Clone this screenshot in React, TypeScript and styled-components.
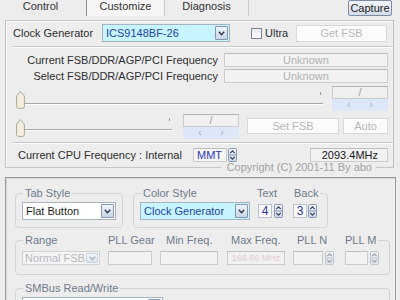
import React from "react";
import styled, { createGlobalStyle } from "styled-components";

const Global = createGlobalStyle`
  html, body { margin: 0; padding: 0; background: #ededed; }
  body { font-family: "Liberation Sans", Arial, sans-serif; font-size: 11px; color: #2a2a2a; }
  * { box-sizing: border-box; }
`;

const Root = styled.div`
  width: 400px;
  height: 300px;
  overflow: hidden;
  background: #ededed;
  display: flex;
  flex-direction: column;
  & > * {
    flex-shrink: 0;
  }
`;

/* ---------- tab bar ---------- */
const TabBar = styled.div`
  display: flex;
  height: 20px;
  align-items: flex-start;
`;

const Tab = styled.div<{ $w: number; $active?: boolean; $dark?: boolean; $pr?: number }>`
  width: ${(p) => p.$w}px;
  height: 16px;
  line-height: 13px;
  text-align: center;
  padding-right: ${(p) => p.$pr ?? 0}px;
  color: #333;
  background: ${(p) => (p.$active ? "#f6f6f6" : "transparent")};
  border-right: 1px solid ${(p) => (p.$dark ? "#8e8e8e" : "#cacaca")};
  box-shadow: ${(p) => (p.$dark ? "1px 0 0 #ffffff" : "none")};
`;

const CaptureBtn = styled.div`
  margin-left: auto;
  margin-right: 8px;
  width: 44px;
  height: 16px;
  line-height: 14px;
  text-align: center;
  color: #222;
  border: 1px solid #7c8ca6;
  border-radius: 2px;
  background: linear-gradient(#f2f5fa, #d2dbe8);
`;

/* ---------- top panel ---------- */
const Panel = styled.div`
  margin: 0 6px 0 5px;
  height: 147px;
  border: 1px solid #c2c2c2;
  border-bottom: none;
  box-shadow: inset 1px 1px 0 #fafafa;
  display: flex;
  flex-direction: column;
  & > * {
    flex-shrink: 0;
  }
`;

const Row = styled.div<{ $mt: number; $h: number; $pl?: number; $pr?: number; $align?: string }>`
  display: flex;
  align-items: ${(p) => p.$align ?? "center"};
  margin-top: ${(p) => p.$mt}px;
  height: ${(p) => p.$h}px;
  padding-left: ${(p) => p.$pl ?? 0}px;
  padding-right: ${(p) => p.$pr ?? 0}px;
  & > * {
    flex-shrink: 0;
  }
`;

const Label = styled.div<{ $w?: number; $right?: boolean; $ml?: number }>`
  width: ${(p) => (p.$w ? `${p.$w}px` : "auto")};
  flex: ${(p) => (p.$w ? "none" : "1")} !important;
  margin-left: ${(p) => p.$ml ?? 0}px;
  text-align: ${(p) => (p.$right ? "right" : "left")};
  white-space: nowrap;
  color: #2e2e2e;
`;

const Separator = styled.div<{ $mt: number }>`
  margin: ${(p) => p.$mt}px 0 0 7px;
  height: 2px;
  border-top: 1px solid #c6c6c6;
  border-bottom: 1px solid #ffffff;
`;

const Combo = styled.div<{ $w: number; $h: number; $bg: string; $ml?: number; $border?: string }>`
  width: ${(p) => p.$w}px;
  height: ${(p) => p.$h}px;
  margin-left: ${(p) => p.$ml ?? 0}px;
  display: flex;
  flex: none;
  border: 1px solid ${(p) => p.$border ?? "#a8b3c2"};
  background: ${(p) => p.$bg};
  padding: 1px;
`;

const ComboText = styled.div<{ $color: string; $pl?: number }>`
  flex: 1;
  min-width: 0;
  display: flex;
  align-items: center;
  padding-left: ${(p) => p.$pl ?? 2}px;
  color: ${(p) => p.$color};
  white-space: nowrap;
  overflow: hidden;
`;

const DropBtn = styled.div<{ $faded?: boolean }>`
  width: ${(p) => (p.$faded ? 12 : 13)}px;
  flex: none;
  display: flex;
  align-items: center;
  justify-content: center;
  border: 1px solid ${(p) => (p.$faded ? "#c7d3e3" : "#8596b0")};
  border-radius: 1px;
  background: ${(p) => (p.$faded ? "linear-gradient(#f2f6fb, #dde6f1)" : "linear-gradient(#f1f5fb, #c8d4e5)")};
`;

const Check = styled.div`
  margin-left: 21px;
  width: 11px;
  height: 11px;
  border: 1px solid #7c8696;
  background: linear-gradient(#e9ecf0, #ffffff);
`;

const FlatBtn = styled.div<{ $w: number; $h: number; $ml?: number; $mt?: number; $auto?: boolean }>`
  width: ${(p) => p.$w}px;
  height: ${(p) => p.$h}px;
  margin-left: ${(p) => (p.$auto ? "auto" : `${p.$ml ?? 0}px`)};
  margin-top: ${(p) => p.$mt ?? 0}px;
  display: flex;
  align-items: center;
  justify-content: center;
  color: #b8b8b8;
  background: #fbfbfb;
  border: 1px solid #dadada;
`;

const Field = styled.div<{ $w: number; $h: number; $ml?: number; $color?: string; $align?: string; $bg?: string }>`
  width: ${(p) => p.$w}px;
  height: ${(p) => p.$h}px;
  margin-left: ${(p) => p.$ml ?? 0}px;
  flex: none;
  display: flex;
  align-items: center;
  justify-content: ${(p) => p.$align ?? "center"};
  padding: 0 3px;
  white-space: nowrap;
  overflow: hidden;
  color: ${(p) => p.$color ?? "#b3b3b3"};
  background: ${(p) => p.$bg ?? "#f2f2f2"};
  border: 1px solid #cbcbcb;
  border-top-color: #bdbdbd;
`;

const Slider = styled.div<{ $w: number }>`
  width: ${(p) => p.$w}px;
  display: flex;
  align-items: flex-start;
  flex: none;
`;

const Thumb = styled.svg<{ $mt: number }>`
  margin-top: ${(p) => p.$mt}px;
  flex: none;
`;

const Track = styled.div<{ $mt: number }>`
  position: relative;
  flex: 1;
  height: 2px;
  margin-top: ${(p) => p.$mt}px;
  border-top: 1px solid #a6a6a6;
  border-bottom: 1px solid #ffffff;
  &::after {
    content: "";
    position: absolute;
    right: 2px;
    top: -12px;
    width: 1px;
    height: 3px;
    background: #9a9a9a;
  }
`;

const SpinPair = styled.div<{ $ml: number; $mt: number }>`
  width: 56px;
  margin-left: ${(p) => p.$ml}px;
  margin-top: ${(p) => p.$mt}px;
  display: flex;
  flex-direction: column;
`;

const PairValue = styled.div`
  height: 13px;
  line-height: 11px;
  text-align: center;
  color: #9c9c9c;
  background: #f0f0f0;
  border: 1px solid #cacaca;
  border-top-color: #b4b4b4;
`;

const PairStrip = styled.div`
  height: 12px;
  display: flex;
  align-items: center;
  justify-content: space-around;
  padding: 0 6px;
  background: #dce8f7;
  color: #9aaac0;
  font-size: 10px;
  line-height: 10px;
`;

const Footer = styled.div`
  margin: -6px 6px 0 5px;
  height: 13px;
  display: flex;
  align-items: center;
`;

const FooterLine = styled.div<{ $w?: number }>`
  height: 1px;
  background: #c6c6c6;
  flex: ${(p) => (p.$w ? "none" : "1")};
  width: ${(p) => (p.$w ? `${p.$w}px` : "auto")};
`;

const FooterText = styled.div`
  padding: 0 4px 0 6px;
  line-height: 13px;
  color: #a2a2a2;
  white-space: nowrap;
`;

/* ---------- lower panel ---------- */
const LowerPanel = styled.div`
  margin: 3px 4px 0 5px;
  height: 140px;
  border: 1px solid #9c9c9c;
  box-shadow: inset 1px 1px 0 #d6d6d6;
  padding: 9px 5px 0 9px;
  display: flex;
  flex-direction: column;
  & > * {
    flex-shrink: 0;
  }
`;

const GroupRow = styled.div`
  display: flex;
  align-items: flex-start;
  gap: 10px;
`;

const Group = styled.fieldset<{ $w?: number; $mt?: number; $pb?: number }>`
  width: ${(p) => (p.$w ? `${p.$w}px` : "auto")};
  flex: none;
  margin: ${(p) => p.$mt ?? 0}px 0 0 0;
  padding: 2px 6px ${(p) => p.$pb ?? 7}px 6px;
  border: 1px solid #d3d3d3;
  border-radius: 4px;
  min-inline-size: 0;
`;

const Legend = styled.legend`
  display: flex;
  margin-left: 1px;
  padding: 0 2px;
  line-height: 13px;
  color: #6e7b8c;
`;

const LegendItem = styled.span<{ $w?: number }>`
  width: ${(p) => (p.$w ? `${p.$w}px` : "auto")};
  flex: none;
  white-space: nowrap;
`;

const FieldRow = styled.div<{ $h: number; $mt?: number }>`
  display: flex;
  align-items: center;
  height: ${(p) => p.$h}px;
  margin-top: ${(p) => p.$mt ?? 0}px;
`;

const NumBox = styled.div<{ $ml: number }>`
  width: 14px;
  height: 14px;
  flex: none;
  margin-left: ${(p) => p.$ml}px;
  display: flex;
  align-items: center;
  justify-content: center;
  color: #2c34a8;
  font-size: 12px;
  background: #f9f9f9;
  border: 1px solid #b9c2ce;
`;

const SpinWrap = styled.div<{ $ml: number; $faded?: boolean }>`
  margin-left: ${(p) => p.$ml}px;
  display: flex;
  flex: none;
  opacity: ${(p) => (p.$faded ? 0.45 : 1)};
`;

const FaintText = styled.span`
  font-size: 9px;
`;

const ValueText = styled.span`
  padding-right: 6px;
`;

/* ---------- small drawings ---------- */
const Chevron = ({ faded }: { faded?: boolean }) => (
  <svg width="7" height="5" viewBox="0 0 7 5">
    <path d="M0.8 0.8 L3.5 3.8 L6.2 0.8" fill="none" stroke={faded ? "#a9b6c8" : "#2e3850"} strokeWidth="1.4" />
  </svg>
);

const Spinner = ({ ml, faded, h = 14 }: { ml: number; faded?: boolean; h?: number }) => (
  <SpinWrap $ml={ml} $faded={faded}>
    <svg width="9" height={h} viewBox={`0 0 9 ${h}`}>
      <defs>
        <linearGradient id="spg" x1="0" y1="0" x2="0" y2="1">
          <stop offset="0" stopColor="#f3f7fc" />
          <stop offset="1" stopColor="#c9d6e8" />
        </linearGradient>
      </defs>
      <rect x="0.5" y="0.5" width="8" height={h - 1} rx="1" fill="url(#spg)" stroke="#8798b2" />
      <line x1="1" y1={h / 2} x2="8" y2={h / 2} stroke="#8798b2" />
      <path d={`M2.3 ${h / 2 - 1.8} L4.5 ${h / 2 - 4.2} L6.7 ${h / 2 - 1.8}`} fill="none" stroke="#303a52" strokeWidth="1.1" />
      <path d={`M2.3 ${h / 2 + 1.8} L4.5 ${h / 2 + 4.2} L6.7 ${h / 2 + 1.8}`} fill="none" stroke="#303a52" strokeWidth="1.1" />
    </svg>
  </SpinWrap>
);

const ThumbIcon = ({ mt }: { mt: number }) => (
  <Thumb $mt={mt} width="9" height="18" viewBox="0 0 9 18">
    <path
      d="M4.5 0.6 L8.4 5 V15.5 Q8.4 17.4 6.5 17.4 H2.5 Q0.6 17.4 0.6 15.5 V5 Z"
      fill="#f3efdc"
      stroke="#a9a79a"
    />
  </Thumb>
);

const Pair = ({ ml, mt }: { ml: number; mt: number }) => (
  <SpinPair $ml={ml} $mt={mt}>
    <PairValue>/</PairValue>
    <PairStrip>
      <span>‹</span>
      <span>›</span>
    </PairStrip>
  </SpinPair>
);

export default function App() {
  return (
    <Root>
      <Global />
      <TabBar>
        <Tab $w={87} $dark $pr={5}>
          Control
        </Tab>
        <Tab $w={78} $active>
          Customize
        </Tab>
        <Tab $w={84}>Diagnosis</Tab>
        <CaptureBtn>Capture</CaptureBtn>
      </TabBar>

      <Panel>
        <Row $mt={3} $h={18} $pl={7} $pr={6}>
          <Label $w={89}>Clock Generator</Label>
          <Combo $w={128} $h={18} $bg="#c6f5fd">
            <ComboText $color="#2544a4">ICS9148BF-26</ComboText>
            <DropBtn>
              <Chevron />
            </DropBtn>
          </Combo>
          <Check />
          <Label $w={30} $ml={3}>
            Ultra
          </Label>
          <FlatBtn $w={91} $h={17} $auto>
            Get FSB
          </FlatBtn>
        </Row>
        <Separator $mt={4} />
        <Row $mt={5} $h={14} $pr={5}>
          <Label $right>Current FSB/DDR/AGP/PCI Frequency</Label>
          <Field $w={164} $h={14} $ml={6}>
            Unknown
          </Field>
        </Row>
        <Row $mt={2} $h={14} $pr={5}>
          <Label $right>Select FSB/DDR/AGP/PCI Frequency</Label>
          <Field $w={164} $h={14} $ml={6}>
            Unknown
          </Field>
        </Row>
        <Row $mt={3} $h={25} $pl={10} $pr={5} $align="flex-start">
          <Slider $w={307}>
            <ThumbIcon mt={5} />
            <Track $mt={17} />
          </Slider>
          <Pair ml={9} mt={0} />
        </Row>
        <Row $mt={2} $h={26} $pl={10} $pr={5} $align="flex-start">
          <Slider $w={156}>
            <ThumbIcon mt={6} />
            <Track $mt={16} />
          </Slider>
          <Pair ml={11} mt={1} />
          <FlatBtn $w={92} $h={16} $ml={8} $mt={5}>
            Set FSB
          </FlatBtn>
          <FlatBtn $w={45} $h={16} $ml={4} $mt={5}>
            Auto
          </FlatBtn>
        </Row>
        <Separator $mt={3} />
        <Row $mt={4} $h={14} $pl={12} $pr={5}>
          <Label $w={175}>Current CPU Frequency : Internal</Label>
          <Field $w={34} $h={14} $color="#2c34b0" $align="flex-start" $bg="#f6f6f6">
            MMT
          </Field>
          <Spinner ml={1} h={14} />
          <Field $w={78} $h={14} $ml={73} $color="#202020" $align="flex-end" $bg="#f2f2f2">
            <ValueText>2093.4MHz</ValueText>
          </Field>
        </Row>
      </Panel>
      <Footer>
        <FooterLine />
        <FooterText>Copyright (C) 2001-11 By abo</FooterText>
        <FooterLine $w={18} />
      </Footer>

      <LowerPanel>
        <GroupRow>
          <Group $w={108}>
            <Legend>
              <LegendItem>Tab Style</LegendItem>
            </Legend>
            <FieldRow $h={18}>
              <Combo $w={94} $h={18} $bg="#ffffff">
                <ComboText $color="#1e1e1e">Flat Button</ComboText>
                <DropBtn>
                  <Chevron />
                </DropBtn>
              </Combo>
            </FieldRow>
          </Group>
          <Group $w={195}>
            <Legend>
              <LegendItem $w={114}>Color Style</LegendItem>
              <LegendItem $w={37}>Text</LegendItem>
              <LegendItem>Back</LegendItem>
            </Legend>
            <FieldRow $h={18}>
              <Combo $w={110} $h={18} $bg="#c6f5fd">
                <ComboText $color="#2544a4">Clock Generator</ComboText>
                <DropBtn>
                  <Chevron />
                </DropBtn>
              </Combo>
              <NumBox $ml={8}>4</NumBox>
              <Spinner ml={2} />
              <NumBox $ml={10}>3</NumBox>
              <Spinner ml={1} />
            </FieldRow>
          </Group>
        </GroupRow>

        <Group $mt={6} $pb={9}>
          <Legend>
            <LegendItem $w={83}>Range</LegendItem>
            <LegendItem $w={58}>PLL Gear</LegendItem>
            <LegendItem $w={65}>Min Freq.</LegendItem>
            <LegendItem $w={66}>Max Freq.</LegendItem>
            <LegendItem $w={48}>PLL N</LegendItem>
            <LegendItem>PLL M</LegendItem>
          </Legend>
          <FieldRow $h={14} $mt={2}>
            <Combo $w={78} $h={14} $bg="#f4f4f4" $border="#d2d2d2">
              <ComboText $color="#b4b9c2" $pl={1}>
                Normal FSB
              </ComboText>
              <DropBtn $faded>
                <Chevron faded />
              </DropBtn>
            </Combo>
            <Field $w={44} $h={14} $ml={8} />
            <Field $w={58} $h={14} $ml={8} />
            <Field $w={58} $h={14} $ml={9} $color="#e4cccc">
              <FaintText>166.66 MHz</FaintText>
            </Field>
            <Field $w={30} $h={14} $ml={8} />
            <Spinner ml={2} faded />
            <Field $w={23} $h={14} $ml={11} />
            <Spinner ml={2} faded />
          </FieldRow>
        </Group>

        <Group $mt={7}>
          <Legend>
            <LegendItem>SMBus Read/Write</LegendItem>
          </Legend>
          <FieldRow $h={18}>
            <Combo $w={141} $h={18} $bg="#ffffff">
              <ComboText $color="#1e1e1e"></ComboText>
              <DropBtn>
                <Chevron />
              </DropBtn>
            </Combo>
          </FieldRow>
        </Group>
      </LowerPanel>
    </Root>
  );
}
